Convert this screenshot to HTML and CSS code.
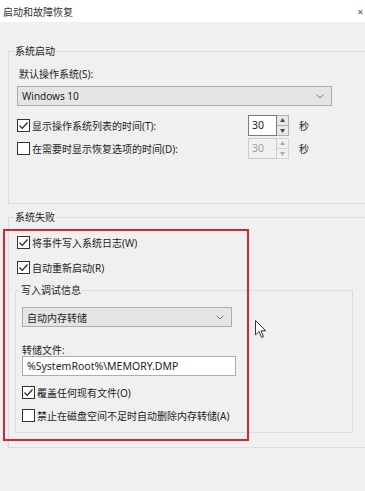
FILE: index.html
```html
<!DOCTYPE html>
<html lang="zh-CN">
<head>
    <meta charset="UTF-8">
    <meta name="viewport" content="width=device-width, initial-scale=1.0">
    <title>启动和故障恢复</title>
    <link rel="stylesheet" href="styles.css">
</head>
<body>
    <div class="window">
        <!-- Title bar -->
        <div class="titlebar">
            <span>启动和故障恢复</span>
            <span class="close">✕</span>
        </div>

        <div class="content">
            <!-- System startup group -->
            <fieldset class="group group-start">
                <legend>系统启动</legend>
                <div class="label first-label">默认操作系统(S):</div>
                <div class="select wide-select">
                    <span>Windows 10</span>
                    <svg class="chevron" width="8" height="5" viewBox="0 0 8 5"><path d="M0.5 0.5 L4 4 L7.5 0.5" fill="none" stroke="#777" stroke-width="1"/></svg>
                </div>

                <div class="row row-first">
                    <span class="check checked"><svg width="11" height="11" viewBox="0 0 11 11"><path d="M1.5 5.5 L4.2 8.3 L9.5 2.5" fill="none" stroke="#222" stroke-width="1.2"/></svg></span>
                    <span class="row-text">显示操作系统列表的时间(T):</span>
                    <div class="spinner">
                        <span class="spin-value">30</span>
                        <span class="spin-buttons">
                            <span class="spin-btn">▲</span>
                            <span class="spin-btn">▼</span>
                        </span>
                    </div>
                    <span class="unit">秒</span>
                </div>
                <div class="row row-second">
                    <span class="check"></span>
                    <span class="row-text">在需要时显示恢复选项的时间(D):</span>
                    <div class="spinner disabled">
                        <span class="spin-value">30</span>
                        <span class="spin-buttons">
                            <span class="spin-btn">▲</span>
                            <span class="spin-btn">▼</span>
                        </span>
                    </div>
                    <span class="unit">秒</span>
                </div>
            </fieldset>

            <!-- System failure group -->
            <fieldset class="group group-fail">
                <legend>系统失败</legend>
                <div class="row row-log">
                    <span class="check checked"><svg width="11" height="11" viewBox="0 0 11 11"><path d="M1.5 5.5 L4.2 8.3 L9.5 2.5" fill="none" stroke="#222" stroke-width="1.2"/></svg></span>
                    <span class="row-text">将事件写入系统日志(W)</span>
                </div>
                <div class="row row-restart">
                    <span class="check checked"><svg width="11" height="11" viewBox="0 0 11 11"><path d="M1.5 5.5 L4.2 8.3 L9.5 2.5" fill="none" stroke="#222" stroke-width="1.2"/></svg></span>
                    <span class="row-text">自动重新启动(R)</span>
                </div>

                <fieldset class="group group-debug">
                    <legend>写入调试信息</legend>
                    <div class="select dump-select">
                        <span>自动内存转储</span>
                        <svg class="chevron" width="8" height="5" viewBox="0 0 8 5"><path d="M0.5 0.5 L4 4 L7.5 0.5" fill="none" stroke="#777" stroke-width="1"/></svg>
                    </div>
                    <div class="label dump-label">转储文件:</div>
                    <div class="textbox">%SystemRoot%\MEMORY.DMP</div>
                    <div class="row row-overwrite">
                        <span class="check checked"><svg width="11" height="11" viewBox="0 0 11 11"><path d="M1.5 5.5 L4.2 8.3 L9.5 2.5" fill="none" stroke="#222" stroke-width="1.2"/></svg></span>
                        <span class="row-text">覆盖任何现有文件(O)</span>
                    </div>
                    <div class="row row-disable">
                        <span class="check"></span>
                        <span class="row-text">禁止在磁盘空间不足时自动删除内存转储(A)</span>
                    </div>
                </fieldset>
            </fieldset>
        </div>

        <!-- Red highlight drawn over the screenshot -->
        <div class="highlight"></div>

        <!-- Mouse pointer -->
        <svg class="pointer" width="12" height="19" viewBox="0 0 12 19">
            <path d="M0.5 0.5 L0.5 15 L4 11.5 L6.5 17.5 L8.5 16.6 L6 10.8 L10.8 10.8 Z" fill="#fff" stroke="#333" stroke-width="1"/>
        </svg>
    </div>
</body>
</html>
```

FILE: styles.css
```css
body {
    margin: 0;
    overflow: hidden;
    background: #f0f0f0;
    font-family: "Noto Sans", "Noto Sans CJK SC", sans-serif;
    font-size: 10px;
    color: #1e1e1e;
}
.window {
    position: relative;
    width: 372px;
    height: 491px;
    background: #f0f0f0;
}
.titlebar {
    width: 365px;
    box-sizing: border-box;
    height: 22px;
    background: #fff;
    display: flex;
    align-items: center;
    justify-content: space-between;
    padding: 0 1px 0 3px;
    font-size: 10px;
    color: #333;
}
.close {
    font-size: 8px;
    color: #555;
}
.content {
    padding-top: 21px;
}
.group {
    margin: 0 0 0 8px;
    border: 1px solid #dcdcdc;
    padding: 0 0 0 8px;
    min-width: 0;
}
.group legend {
    padding: 0 1px;
    margin-left: -3px;
    line-height: 16px;
    height: 16px;
}
.group-start {
    padding-bottom: 45px;
}
.group-fail {
    margin-top: 5px;
    padding: 0 18px 14px 6px;
}
.group-fail legend {
    margin-left: -1px;
}
.group-debug {
    margin: 5px 0 0 0;
    padding: 0 0 7px 6px;
}
.group-debug legend {
    margin-left: -2px;
}
.label {
    line-height: 16px;
}
.first-label {
    margin-top: 7px;
    padding-left: 2px;
}
.select {
    height: 20px;
    box-sizing: border-box;
    border: 1px solid #adadad;
    background: #e5e5e5;
    display: flex;
    align-items: center;
    justify-content: space-between;
    padding: 0 7px 0 4px;
}
.wide-select {
    width: 315px;
    margin-top: 4px;
}
.dump-select {
    width: 210px;
    margin-top: 9px;
}
.row {
    display: flex;
    align-items: center;
    height: 20px;
    margin-left: 0;
}
.row-first {
    margin-top: 9px;
}
.row-second {
    margin-top: 3px;
}
.row-log {
    margin-top: 7px;
    margin-left: 2px;
}
.row-restart {
    margin-top: 5px;
    margin-left: 2px;
}
.row-overwrite {
    margin-top: 6px;
}
.row-disable {
    margin-top: 3px;
}
.check {
    width: 13px;
    height: 13px;
    box-sizing: border-box;
    border: 1px solid #333;
    background: #fff;
    display: flex;
    align-items: center;
    justify-content: center;
    flex-shrink: 0;
}
.row-text {
    margin-left: 2px;
}
.row-first .row-text,
.row-second .row-text {
    width: 216px;
}
.spinner {
    display: flex;
    height: 21px;
}
.spin-value {
    width: 29px;
    box-sizing: border-box;
    border: 1px solid #7a7a7a;
    background: #fff;
    padding-left: 3px;
    line-height: 19px;
    font-size: 10.5px;
}
.spin-buttons {
    display: flex;
    flex-direction: column;
    width: 12px;
}
.spin-btn {
    flex: 1;
    box-sizing: border-box;
    border: 1px solid #adadad;
    border-left: none;
    background: #e8e8e8;
    font-size: 5px;
    color: #444;
    text-align: center;
    line-height: 9px;
}
.spin-btn + .spin-btn {
    border-top: none;
}
.spinner.disabled .spin-value {
    border-color: #cccccc;
    background: #f0f0f0;
    color: #a0a0a0;
}
.spinner.disabled .spin-btn {
    border-color: #d5d5d5;
    background: #f0f0f0;
    color: #aaa;
}
.unit {
    margin-left: 10px;
}
.dump-label {
    margin-top: 17px;
    line-height: 12px;
}
.textbox {
    width: 214px;
    height: 20px;
    box-sizing: border-box;
    border: 1px solid #adadad;
    background: #fff;
    padding-left: 4px;
    line-height: 18px;
    font-size: 10.5px;
}
.highlight {
    position: absolute;
    left: 3px;
    top: 229px;
    width: 246px;
    height: 212px;
    box-sizing: border-box;
    border: 2px solid #d8262c;
}
.pointer {
    position: absolute;
    left: 255px;
    top: 320px;
}
```
